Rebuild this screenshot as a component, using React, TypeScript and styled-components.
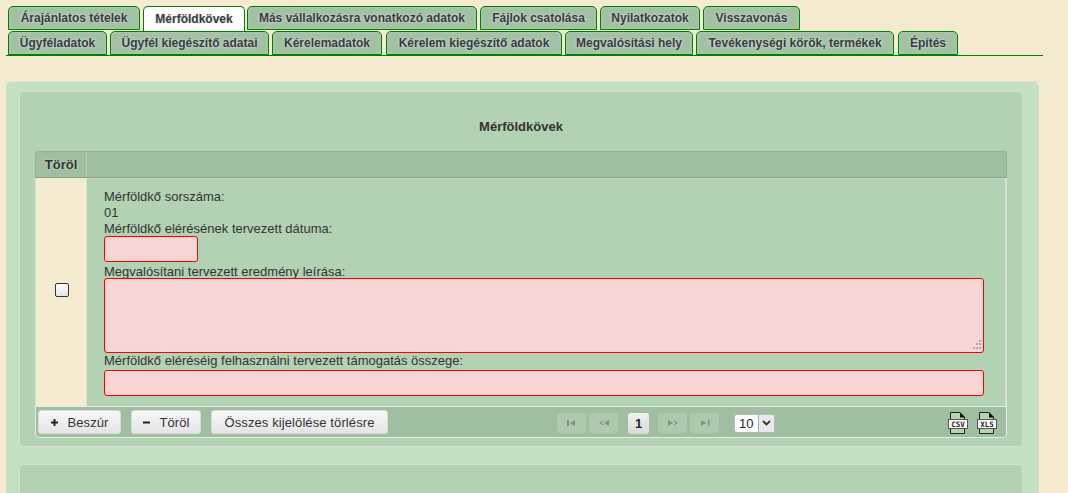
import React from "react";
import styled, { createGlobalStyle } from "styled-components";

const Global = createGlobalStyle`
  html, body { margin: 0; padding: 0; height: 493px; overflow: hidden; background: #f5ebd0; }
  body { font-family: "Liberation Sans", Arial, sans-serif; font-size: 13px; color: #333; }
  * { box-sizing: border-box; }
`;

const Page = styled.div`
  width: 1068px;
  height: 493px;
  overflow: hidden;
  padding-top: 6px;
`;
const TabArea = styled.div`
  margin: 0 25px 0 6px;
  height: 50px;
  border-bottom: 1px solid #008000;
`;
const TabRow = styled.div`
  display: flex;
  height: 25px;
  padding-left: 2px;
`;
const Tab = styled.div<{ $active?: boolean; $w: number; $gap: number }>`
  flex: none;
  width: ${p => p.$w}px;
  margin-right: ${p => p.$gap}px;
  height: ${p => (p.$active ? 25 : 24)}px;
  border: 1px solid #008000;
  border-radius: 5px 5px 0 0;
  border-bottom-width: ${p => (p.$active ? 0 : 1)}px;
  background: ${p => (p.$active ? "#fff" : "#a2c1a4")};
  display: flex;
  align-items: center;
  justify-content: center;
  font-weight: bold;
  font-size: 12px;
  color: #3a3a44;
  text-shadow: ${p => (p.$active ? "0 0 2px #ccc" : "0 0 3px #dfe9df")};
  box-shadow: ${p => (p.$active ? "none" : "inset 0 0 3px #b8d2b8")};
`;
const Rule = styled.div`
  height: 1px;
  margin: 25px 25px 0 3px;
  background: #e6dfcc;
`;
const Outer = styled.div`
  margin-left: 6px;
  width: 1033px;
  height: 420px;
  background: #c5e1c5;
  border-radius: 5px 5px 0 0;
  padding: 9px 0 0 13px;
`;
const Panel = styled.div<{ $fill?: boolean }>`
  width: 1004px;
  height: ${p => (p.$fill ? 40 : 356)}px;
  margin-bottom: 17px;
  background: #b3d1b3;
  border: 1px solid #d5dfd5;
  border-radius: 4px;
  padding: 0 15px;
`;
const Title = styled.div`
  height: 59px;
  padding-top: 27px;
  text-align: center;
  font-weight: bold;
  font-size: 13px;
  color: #333;
`;
const HeaderRow = styled.div`
  display: flex;
  height: 27px;
  background: #a0bea0;
  border: 1px solid #94b294;
  border-bottom: 1px solid #889f88;
  border-radius: 3px 3px 0 0;
`;
const HeadCell = styled.div`
  width: 51px;
  border-right: 1px solid #b3ccb3;
  display: flex;
  align-items: center;
  justify-content: center;
  font-weight: bold;
  font-size: 13px;
  text-shadow: 0 0 2px #d6e4d6;
`;
const BodyRow = styled.div`
  display: flex;
  height: 228px;
  border-right: 2px solid #d8e2d8;
  border-left: 1px solid #d8e2d8;
`;
const CheckCell = styled.div`
  width: 51px;
  background: #f5ebd0;
  border-right: 1px solid #dde0cc;
  display: flex;
  align-items: center;
  justify-content: center;
  padding: 0 0 4px 1px;
`;
const Check = styled.div`
  width: 14px;
  height: 14px;
  background: linear-gradient(#fff, #e6e6e6);
  border: 1.5px solid #333;
  border-radius: 2px;
`;
const Fields = styled.div`
  flex: 1;
  padding: 10px 21px 0 17px;
  border-top: 1px solid #c9d6c9;
  display: flex;
  flex-direction: column;
`;
const Label = styled.div`
  flex: none;
  height: 16px;
  line-height: 16px;
  font-size: 13px;
  color: #333;
`;
const Invalid = `
  flex: none;
  background: #f5d6d4;
  border: 1px solid #f00;
  border-radius: 3px;
`;
const DateInput = styled.div`
  ${Invalid}
  width: 94px;
  height: 26px;
  margin-top: -1px;
  margin-bottom: 2px;
`;
const TextArea = styled.div`
  ${Invalid}
  position: relative;
  width: 100%;
  height: 75px;
  margin-top: -2px;
`;
const Grip = styled.svg`
  position: absolute;
  right: 1px;
  bottom: 1px;
`;
const WideInput = styled.div`
  ${Invalid}
  width: 100%;
  height: 26px;
  margin-top: 1px;
`;
const Toolbar = styled.div`
  position: relative;
  display: flex;
  align-items: center;
  height: 32px;
  background: #a0bea0;
  border: 1px solid #e4ece4;
  border-radius: 0 0 4px 4px;
  padding: 0 0 0 2px;
`;
const Btn = styled.div<{ $w: number; $mr: number }>`
  width: ${p => p.$w}px;
  margin-right: ${p => p.$mr}px;
  height: 24px;
  display: flex;
  align-items: center;
  justify-content: center;
  gap: 8px;
  background: linear-gradient(#f8f8f8, #e4e4e4);
  border: 1px solid #d6dcd6;
  border-radius: 3px;
  font-size: 13px;
  letter-spacing: 0.1px;
  color: #333;
`;
const Pager = styled.div`
  position: absolute;
  left: 521px;
  top: 6px;
  display: flex;
  align-items: center;
  height: 20px;
`;
const PageBtn = styled.div<{ $mr: number }>`
  width: 29px;
  height: 20px;
  margin-right: ${p => p.$mr}px;
  background: #aec9ae;
  border-radius: 3px;
  display: flex;
  align-items: center;
  justify-content: center;
`;
const PageNum = styled.div`
  width: 21px;
  height: 21px;
  margin: 0 9px 0 7px;
  background: linear-gradient(#f2f2f2, #d8d8d8);
  border-radius: 3px;
  display: flex;
  align-items: center;
  justify-content: center;
  font-weight: bold;
  font-size: 13px;
  color: #223;
`;
const Select = styled.div`
  display: flex;
  align-items: center;
  width: 41px;
  height: 19px;
  margin-left: 15px;
  background: #fff;
  border: 1px solid #bbb;
  border-radius: 3px;
  overflow: hidden;
  font-size: 13px;
  color: #223;
`;
const SelectValue = styled.span`
  flex: 1;
  padding-left: 4px;
`;
const SelectArrow = styled.span`
  width: 16px;
  height: 100%;
  background: #e8e8e8;
  border-left: 1px solid #aaa;
  display: flex;
  align-items: center;
  justify-content: center;
`;
const Exports = styled.div`
  position: absolute;
  left: 912px;
  top: 5px;
  display: flex;
  gap: 9px;
`;
const FileSvg = styled.svg`
  display: block;
`;
const FileIconText = styled.text`
  font-family: "DejaVu Sans Mono", "Liberation Mono", monospace;
  font-size: 7.5px;
  font-weight: bold;
  fill: #222;
`;

function FileIcon({ label }: { label: string }) {
  return (
    <FileSvg width="20" height="22" viewBox="0 0 20 22">
      <path d="M2.500 .5H12L16.500 5V21.500H2.500Z" fill="#b6d3b6" stroke="#222" />
      <path d="M12 .5L17 5.500H12Z" fill="#000" />
      <rect x=".5" y="7.500" width="19" height="9" fill="#fff" stroke="#555" />
      <FileIconText x="10" y="14.800" textAnchor="middle">{label}</FileIconText>
    </FileSvg>
  );
}

function PagerIcon({ kind }: { kind: "first" | "prev" | "next" | "last" }) {
  const paths = {
    first: "M1 1V7H3V1ZM9 1L4 4L9 7Z",
    prev: "M5.500 1.500L1 4L5.500 6.500V5.500L3 4L5.500 2.500ZM11 1L6 4L11 7Z",
    next: "M1 1L6 4L1 7ZM6.500 1.500L11 4L6.500 6.500V5.500L9 4L6.500 2.500Z",
    last: "M2 1L7 4L2 7ZM9 1V7H10.500V1Z",
  };
  return (
    <svg width="12" height="8" viewBox="0 0 12 8">
      <path d={paths[kind]} fill="#7d947d" />
    </svg>
  );
}

const row1: [string, number, number, boolean?][] = [
  ["Árajánlatos tételek", 132, 3],
  ["Mérföldkövek", 102, 2, true],
  ["Más vállalkozásra vonatkozó adatok", 230, 3],
  ["Fájlok csatolása", 117, 3],
  ["Nyilatkozatok", 100, 3],
  ["Visszavonás", 97, 0],
];
const row2: [string, number, number][] = [
  ["Ügyféladatok", 99, 3],
  ["Ügyfél kiegészítő adatai", 159, 3],
  ["Kérelemadatok", 110, 4],
  ["Kérelem kiegészítő adatok", 176, 3],
  ["Megvalósítási hely", 128, 3],
  ["Tevékenységi körök, termékek", 198, 4],
  ["Építés", 60, 0],
];

export default function App() {
  return (
    <Page>
      <Global />
      <TabArea>
        <TabRow>
          {row1.map(([t, w, g, a]) => (
            <Tab key={t} $w={w} $gap={g} $active={a}>{t}</Tab>
          ))}
        </TabRow>
        <TabRow>
          {row2.map(([t, w, g]) => (
            <Tab key={t} $w={w} $gap={g}>{t}</Tab>
          ))}
        </TabRow>
      </TabArea>
      <Rule />
      <Outer>
        <Panel>
          <Title>Mérföldkövek</Title>
          <HeaderRow>
            <HeadCell>Töröl</HeadCell>
          </HeaderRow>
          <BodyRow>
            <CheckCell><Check /></CheckCell>
            <Fields>
              <Label>Mérföldkő sorszáma:</Label>
              <Label>01</Label>
              <Label>Mérföldkő elérésének tervezett dátuma:</Label>
              <DateInput />
              <Label>Megvalósítani tervezett eredmény leírása:</Label>
              <TextArea>
                <Grip width="12" height="12" viewBox="0 0 12 12">
                  <path d="M9 1h2v2H9ZM6 4h2v2H6ZM9 4h2v2H9ZM3 8h2v2H3ZM6 8h2v2H6ZM9 8h2v2H9Z" fill="#b9a6a6" />
                </Grip>
              </TextArea>
              <Label>Mérföldkő eléréséig felhasználni tervezett támogatás összege:</Label>
              <WideInput />
            </Fields>
          </BodyRow>
          <Toolbar>
            <Btn $w={83} $mr={10}>
              <svg width="9" height="9" viewBox="0 0 9 9"><path d="M3.500 1H5.500V3.500H8V5.500H5.500V8H3.500V5.500H1V3.500H3.500Z" fill="#222" /></svg>
              Beszúr
            </Btn>
            <Btn $w={70} $mr={10}>
              <svg width="9" height="9" viewBox="0 0 9 9"><path d="M1 3.500H8V5.500H1Z" fill="#222" /></svg>
              Töröl
            </Btn>
            <Btn $w={177} $mr={0}>Összes kijelölése törlésre</Btn>
            <Pager>
              <PageBtn $mr={3}><PagerIcon kind="first" /></PageBtn>
              <PageBtn $mr={3}><PagerIcon kind="prev" /></PageBtn>
              <PageNum>1</PageNum>
              <PageBtn $mr={3}><PagerIcon kind="next" /></PageBtn>
              <PageBtn $mr={0}><PagerIcon kind="last" /></PageBtn>
              <Select>
                <SelectValue>10</SelectValue>
                <SelectArrow>
                  <svg width="9" height="6" viewBox="0 0 9 6"><path d="M1 1L4.500 4.500L8 1" fill="none" stroke="#333" strokeWidth="1.800" /></svg>
                </SelectArrow>
              </Select>
            </Pager>
            <Exports>
              <FileIcon label="CSV" />
              <FileIcon label="XLS" />
            </Exports>
          </Toolbar>
        </Panel>
        <Panel $fill />
      </Outer>
    </Page>
  );
}
